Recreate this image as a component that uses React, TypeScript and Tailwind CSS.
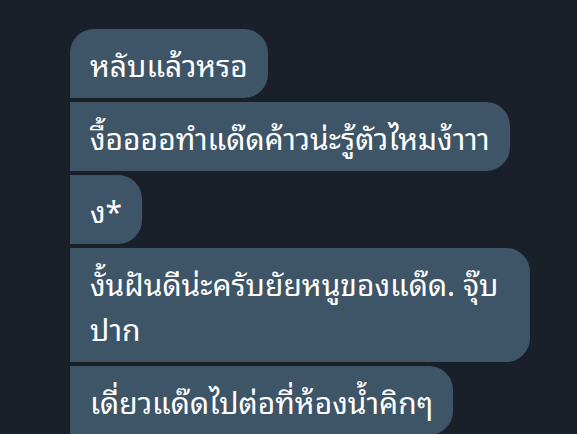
const messages = [
  "หลับแล้วหรอ",
  "งื้ออออทำแด๊ดค้าวน่ะรู้ตัวไหมง้าาา",
  "ง*",
  "งั้นฝันดีน่ะครับยัยหนูของแด๊ด. จุ๊บ ปาก",
  "เดี่ยวแด๊ดไปต่อที่ห้องน้ำคิกๆ",
];

export default function App() {
  return (
    <div className="h-[434px] w-[577px] overflow-hidden bg-[#19202a] pl-[70px] pt-[29px] font-['Noto_Sans_Thai_Looped','Noto_Sans_Thai','Noto_Sans',sans-serif]">
      <div className="flex flex-col items-start gap-1">
        {messages.map((m, i) => (
          <div
            key={i}
            className={
              "max-w-[460px] rounded-r-[24px] bg-[#3e5467] px-5 py-3 text-[30px] leading-[45px] text-white " +
              (i === 0 ? "rounded-tl-[24px]" : "")
            }
          >
            {m}
          </div>
        ))}
      </div>
    </div>
  );
}
